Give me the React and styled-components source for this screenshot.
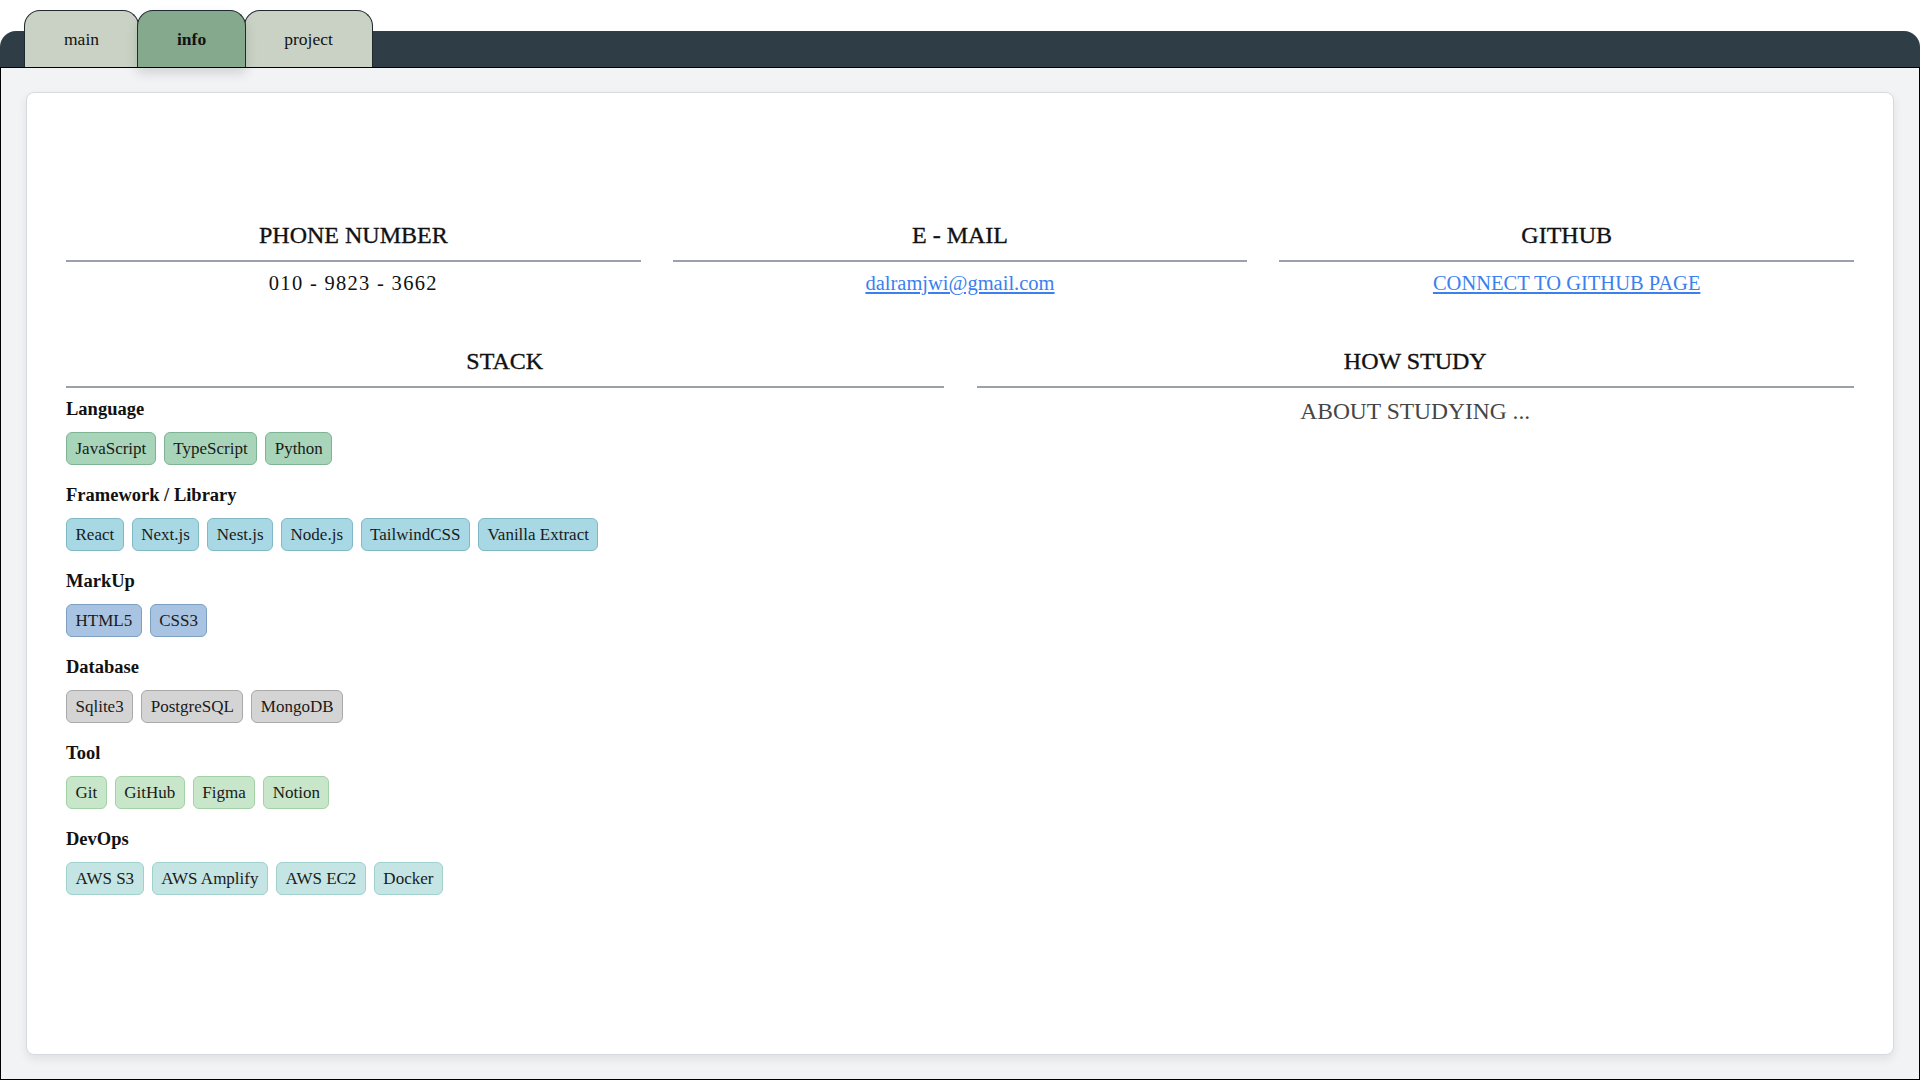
import React from "react";
import styled, { createGlobalStyle } from "styled-components";

const GlobalStyle = createGlobalStyle`
  * {
    box-sizing: border-box;
  }
  body {
    margin: 0;
    background: #ffffff;
    font-family: "Liberation Serif", "DejaVu Serif", serif;
    color: #111111;
  }
`;

const Page = styled.div`
  width: 1920px;
  height: 1080px;
  display: flex;
  flex-direction: column;
`;

const TabBar = styled.nav`
  margin-top: 31px;
  height: 36px;
  background-color: #2f3e46;
  border-radius: 16px 16px 0 0;
  display: flex;
  align-items: flex-end;
  padding-left: 24px;
`;

const Tab = styled.button`
  position: relative;
  z-index: ${(p) => (p.$active ? 3 : 2)};
  height: 57px;
  margin-left: -2px;
  padding: 0 39px;
  border: 1px solid #1f2a2e;
  border-bottom: none;
  border-radius: 16px 16px 0 0;
  background-color: ${(p) => (p.$active ? "#84a98c" : "#cad2c5")};
  box-shadow: ${(p) => (p.$active ? "0 6px 12px rgba(0, 0, 0, 0.14)" : "none")};
  font-family: "Liberation Serif", serif;
  font-size: 17.5px;
  font-weight: ${(p) => (p.$active ? 600 : 400)};
  color: #111111;
  cursor: pointer;
  &:first-child {
    margin-left: 0;
  }
`;

const Board = styled.main`
  position: relative;
  z-index: 1;
  flex: 1;
  background-color: #f2f3f5;
  border: 1px solid #000000;
  padding: 24px 25px;
  display: flex;
`;

const Card = styled.section`
  flex: 1;
  background-color: #ffffff;
  border: 1px solid #d6dae0;
  border-radius: 8px;
  box-shadow: 0 4px 10px rgba(0, 0, 0, 0.08);
  padding: 128px 39px 40px 39px;
  display: flex;
  flex-direction: column;
  gap: 52px;
`;

const InfoRow = styled.div`
  display: grid;
  grid-template-columns: repeat(${(p) => p.$cols}, 1fr);
  column-gap: ${(p) => (p.$cols === 3 ? "32px" : "33px")};
`;

const Column = styled.div`
  display: flex;
  flex-direction: column;
`;

const Heading = styled.h2`
  margin: 0;
  font-size: 24px;
  line-height: 28px;
  font-weight: 400;
  -webkit-text-stroke: 0.35px #111111;
  text-align: center;
  color: #111111;
`;

const Rule = styled.hr`
  margin: 11px 0 0 0;
  border: none;
  height: 2px;
  background-color: #9ca0ab;
`;

const Value = styled.p`
  margin: 9px 0 0 0;
  font-size: 20.5px;
  line-height: 24px;
  text-align: center;
  letter-spacing: ${(p) => (p.$spaced ? "1.3px" : "0")};
  color: #111111;
`;

const Link = styled.a`
  color: #3b7ff0;
  text-decoration: underline;
`;

const StackList = styled.div`
  margin-top: 10px;
  display: flex;
  flex-direction: column;
  gap: 19px;
`;

const Group = styled.div`
  display: flex;
  flex-direction: column;
  gap: 12px;
`;

const GroupLabel = styled.h3`
  margin: 0;
  font-size: 18.5px;
  line-height: 22px;
  font-weight: 700;
  color: #111111;
`;

const TagRow = styled.div`
  display: flex;
  flex-wrap: wrap;
  gap: 8px;
`;

const Tag = styled.span`
  display: inline-block;
  padding: 5px 8.5px;
  font-size: 17px;
  line-height: 21px;
  border-radius: 6px;
  border: 1px solid ${(p) => p.$border};
  background-color: ${(p) => p.$bg};
  color: #1a1a1a;
`;

const About = styled.p`
  margin: 10px 0 0 0;
  font-size: 23.5px;
  line-height: 26px;
  text-align: center;
  color: #454545;
`;

const stack = [
  {
    label: "Language",
    bg: "#a8d5ba",
    border: "#7eb394",
    items: ["JavaScript", "TypeScript", "Python"],
  },
  {
    label: "Framework / Library",
    bg: "#a8d8e4",
    border: "#80b8c6",
    items: ["React", "Next.js", "Nest.js", "Node.js", "TailwindCSS", "Vanilla Extract"],
  },
  {
    label: "MarkUp",
    bg: "#a9c4e2",
    border: "#7d9fc2",
    items: ["HTML5", "CSS3"],
  },
  {
    label: "Database",
    bg: "#d4d4d4",
    border: "#a9a9a9",
    items: ["Sqlite3", "PostgreSQL", "MongoDB"],
  },
  {
    label: "Tool",
    bg: "#c8e6c9",
    border: "#a3d1a6",
    items: ["Git", "GitHub", "Figma", "Notion"],
  },
  {
    label: "DevOps",
    bg: "#c4e5e3",
    border: "#a0d1cd",
    items: ["AWS S3", "AWS Amplify", "AWS EC2", "Docker"],
  },
];

const tabs = ["main", "info", "project"];

const App = () => {
  return (
    <>
      <GlobalStyle />
      <Page>
        <TabBar>
          {tabs.map((t) => (
            <Tab key={t} $active={t === "info"}>
              {t}
            </Tab>
          ))}
        </TabBar>
        <Board>
          <Card>
            <InfoRow $cols={3}>
              <Column>
                <Heading>PHONE NUMBER</Heading>
                <Rule />
                <Value $spaced>010 - 9823 - 3662</Value>
              </Column>
              <Column>
                <Heading>E - MAIL</Heading>
                <Rule />
                <Value>
                  <Link href="mailto:dalramjwi@gmail.com">dalramjwi@gmail.com</Link>
                </Value>
              </Column>
              <Column>
                <Heading>GITHUB</Heading>
                <Rule />
                <Value>
                  <Link href="#">CONNECT TO GITHUB PAGE</Link>
                </Value>
              </Column>
            </InfoRow>

            <InfoRow $cols={2}>
              <Column>
                <Heading>STACK</Heading>
                <Rule />
                <StackList>
                  {stack.map((g) => (
                    <Group key={g.label}>
                      <GroupLabel>{g.label}</GroupLabel>
                      <TagRow>
                        {g.items.map((item) => (
                          <Tag key={item} $bg={g.bg} $border={g.border}>
                            {item}
                          </Tag>
                        ))}
                      </TagRow>
                    </Group>
                  ))}
                </StackList>
              </Column>
              <Column>
                <Heading>HOW STUDY</Heading>
                <Rule />
                <About>ABOUT STUDYING ...</About>
              </Column>
            </InfoRow>
          </Card>
        </Board>
      </Page>
    </>
  );
};

export default App;
